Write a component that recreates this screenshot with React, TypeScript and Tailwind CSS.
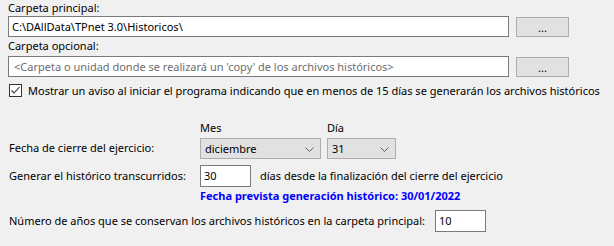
import React from "react";

const font = "font-['Noto_Sans','Open_Sans',sans-serif]";

function Chevron() {
  return (
    <svg width="9" height="5" viewBox="0 0 9 5" className="absolute right-[6px] top-[8px]">
      <path d="M0.5 0.5 L4.5 4.5 L8.5 0.5" fill="none" stroke="#606060" strokeWidth="1" />
    </svg>
  );
}

function Select({ value, width }: { value: string; width: string }) {
  return (
    <div
      className={`relative h-[21px] ${width} border border-[#adadad] bg-[#e1e1e1] pl-[4px] leading-[19px] text-black`}
    >
      {value}
      <Chevron />
    </div>
  );
}

function Browse() {
  return (
    <div className="ml-[7px] mt-px flex h-[20px] w-[53px] items-end justify-center border border-[#adadad] bg-[#e1e1e1] pb-[1px] leading-[14px] text-black">
      ...
    </div>
  );
}

export default function App() {
  return (
    <div className={`h-[246px] w-[614px] overflow-hidden whitespace-nowrap bg-[#f0f0f0] px-[8px] text-[11px] text-black ${font}`}>
      {/* Carpeta principal */}
      <div className="h-[16px] leading-[16px]">Carpeta principal:</div>
      <div className="flex h-[21px]">
        <div className="h-[21px] w-[501px] overflow-hidden border border-[#7a7a7a] bg-white pl-[3px] leading-[19px]">
          C:\DAllData\TPnet 3.0\Historicos\
        </div>
        <Browse />
      </div>

      {/* Carpeta opcional */}
      <div className="mb-[2px] mt-px h-[16px] leading-[16px]">Carpeta opcional:</div>
      <div className="flex h-[21px]">
        <div className="h-[21px] w-[501px] overflow-hidden border border-[#7a7a7a] bg-white pl-[5px] leading-[19px] text-[#6d6d6d]">
          &lt;Carpeta o unidad donde se realizará un 'copy' de los archivos históricos&gt;
        </div>
        <Browse />
      </div>

      {/* Aviso */}
      <div className="mt-[7px] flex h-[13px] items-center">
        <div className="ml-px flex h-[13px] w-[13px] items-center justify-center border border-[#333333] bg-white">
          <svg width="11" height="11" viewBox="0 0 11 11">
            <path d="M1.5 5.5 L4 8 L9.5 2" fill="none" stroke="#333333" strokeWidth="1.1" />
          </svg>
        </div>
        <span className="ml-[6px] leading-[16px]">
          Mostrar un aviso al iniciar el programa indicando que en menos de 15 días se generarán los archivos históricos
        </span>
      </div>

      {/* Fecha de cierre */}
      <div className="mt-[23px] flex h-[16px] leading-[16px]">
        <div className="w-[192px]" />
        <div className="w-[127px]">Mes</div>
        <div>Día</div>
      </div>
      <div className="mt-[2px] flex h-[21px] items-center">
        <div className="w-[192px] pl-px">Fecha de cierre del ejercicio:</div>
        <Select value="diciembre" width="w-[121px]" />
        <div className="w-[6px]" />
        <Select value="31" width="w-[69px]" />
      </div>

      {/* Generar */}
      <div className="mt-[6px] flex h-[22px] items-center">
        <div className="w-[192px] pl-px">Generar el histórico transcurridos:</div>
        <div className="h-[22px] w-[51px] border border-[#7a7a7a] bg-white pl-[3px] leading-[20px]">30</div>
        <div className="ml-[9px]">días desde la finalización del cierre del ejercicio</div>
      </div>
      <div className="mt-px flex h-[16px] leading-[16px]">
        <div className="w-[192px]" />
        <div className="font-bold text-[#0000ff]">Fecha prevista generación histórico: 30/01/2022</div>
      </div>

      {/* Número de años */}
      <div className="mt-[6px] flex h-[22px] items-center">
        <div className="pl-px">Número de años que se conservan los archivos históricos en la carpeta principal:</div>
        <div className="ml-[10px] h-[22px] w-[51px] border border-[#7a7a7a] bg-white pl-[3px] leading-[20px]">10</div>
      </div>
    </div>
  );
}
